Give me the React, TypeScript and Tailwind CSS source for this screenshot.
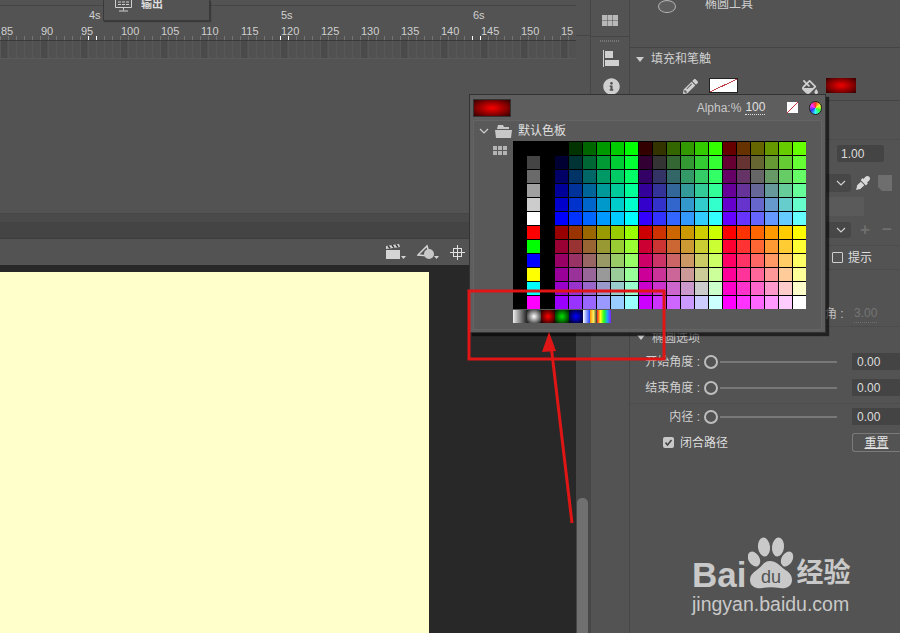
import React from "react";
import { FaFillDrip, FaInfoCircle, FaPencilAlt, FaEyeDropper } from "react-icons/fa";

const frames = ["85", "90", "95", "100", "105", "110", "115", "120", "125", "130", "135", "140", "145", "150", "15"];
const levels = [0, 51, 102, 153, 204, 255];
const baseColors = ["#000000", "#444444", "#6a6a6a", "#a0a0a0", "#cccccc", "#ffffff", "#ff0000", "#00ff00", "#0000ff", "#ffff00", "#00ffff", "#ff00ff"];

const paletteRows = baseColors.map((base, row) => {
  const cells = ["#000000", base, "#000000"];
  for (let block = 0; block < 3; block++) {
    for (let g = 0; g < 6; g++) {
      const r = levels[block + (row >= 6 ? 3 : 0)];
      cells.push(`rgb(${r},${levels[g]},${levels[row % 6]})`);
    }
  }
  return cells;
});

const Slider = ({ label, className }: { label: string; className?: string }) => (
  <div className={`flex h-[17px] items-center ${className ?? ""}`}>
    <span className="w-[70px] text-right text-[12px] text-[#d0d0d0]">{label}</span>
    <div className="ml-[4px] h-[14px] w-[14px] rounded-full border-2 border-[#bdbdbd]" />
    <div className="ml-[2px] h-[2px] w-[117px] bg-[#787878]" />
    <div className="ml-[15px] flex h-[17px] w-[48px] items-center bg-[#444444] pl-[5px] text-[12px] text-[#dddddd]">0.00</div>
  </div>
);

const Chevron = () => (
  <svg width="10" height="6" viewBox="0 0 10 6" fill="none" stroke="#cfcfcf" strokeWidth="1.2">
    <path d="M1 1l4 4 4-4" />
  </svg>
);

const Triangle = () => <div className="h-0 w-0 border-x-[4.5px] border-t-[5px] border-x-transparent border-t-[#cccccc]" />;

const BaiduPaw = () => (
  <svg width="48" height="54" viewBox="0 0 48 54" fill="#c9c9c9">
    <ellipse cx="16" cy="11" rx="6" ry="9.5" transform="rotate(-6 16 11)" />
    <ellipse cx="30" cy="11" rx="6" ry="9.5" transform="rotate(6 30 11)" />
    <ellipse cx="6" cy="23" rx="5.5" ry="8" transform="rotate(-30 6 23)" />
    <ellipse cx="39" cy="23" rx="5.5" ry="8" transform="rotate(30 39 23)" />
    <path d="M22 25c6 0 9 4 14 8 5 3 8 6 8 11 0 7-7 9-12 8-6-1-12-1-18 0-5 1-12-1-12-8 0-5 4-8 8-11 4-3 6-8 12-8z" />
    <text x="23" y="47" textAnchor="middle" fontSize="18" fontFamily="Liberation Sans" fill="#535353">du</text>
  </svg>
);

export default function App() {
  return (
    <div className="relative flex h-[633px] w-[900px] overflow-hidden bg-[#535353] font-['Liberation_Sans','Noto_Sans_CJK_SC',sans-serif]">
      {/* timeline + stage */}
      <div className="flex w-[576px] flex-col">
        <div className="h-[6px] border-b border-[#464646]" />
        <div className="flex h-[18px] pl-[89px] text-[11px] leading-[18px] text-[#d0d0d0]">
          <span className="w-[192px]">4s</span>
          <span className="w-[192px]">5s</span>
          <span>6s</span>
        </div>
        <div className="flex h-[12px] pl-[1px] text-[11px] leading-[14px] text-[#d0d0d0]">
          {frames.map((f, i) => (
            <span key={i} className="w-[40px] shrink-0">{f}</span>
          ))}
        </div>
        <div className="h-[5px] border-b border-[#3a3a3a] bg-[repeating-linear-gradient(90deg,transparent_0_88px,#ffffff_88px_89px,transparent_89px_96px,#ffffff_96px_97px,transparent_97px_192px),repeating-linear-gradient(90deg,#747474_0_1px,transparent_1px_8px)]" />
        <div className="h-[18px] border-b border-[#5a5a5a] bg-[repeating-linear-gradient(90deg,#585858_0_1px,#4a4a4a_1px_7px,#515151_7px_8px,#585858_8px_9px,#515151_9px_16px,#585858_16px_17px,#515151_17px_24px,#585858_24px_25px,#515151_25px_32px,#585858_32px_33px,#515151_33px_40px)]" />
        <div className="flex-1" />
        <div className="h-[9px] border-t border-[#464646] bg-[#4a4a4a]" />
        <div className="h-[16px] bg-[#444444]" />
        <div className="flex h-[27px] items-center gap-[11px] border-t border-[#3c3c3c] pl-[385px]">
          <svg width="21" height="16" viewBox="0 0 21 16" fill="#d4d4d4">
            <path d="M1 6h14v9H1z" />
            <path d="M1 2l13-2 1 3-14 2z" />
            <path d="M3 1.7l2 2.6M7 1l2 2.7M11 .5l2 2.6" stroke="#333" strokeWidth="1.4" />
            <path d="M16 12h5l-2.5 3z" />
          </svg>
          <svg width="22" height="16" viewBox="0 0 22 16" fill="none">
            <path d="M1 11L10 2l3 10z" stroke="#d4d4d4" strokeWidth="1.5" />
            <circle cx="12" cy="10" r="5" fill="#c8c8c8" />
            <path d="M17 12h5l-2.5 3z" fill="#d4d4d4" />
          </svg>
          <svg width="15" height="15" viewBox="0 0 15 15" fill="none" stroke="#e0e0e0" strokeWidth="1">
            <rect x="3.5" y="3.5" width="8" height="8" />
            <path d="M7.5 0v15M0 7.5h15" />
          </svg>
        </div>
        <div className="flex h-[368px] flex-col bg-[#282828] pt-[7px]">
          <div className="w-[429px] flex-1 bg-[#ffffcc]" />
        </div>
      </div>

      {/* scroll strip */}
      <div className="flex w-[14px] flex-col">
        <div className="h-[36px] border-b border-[#464646]" />
        <div className="h-[229px]" />
        <div className="flex flex-1 flex-col justify-end bg-[#474747] pl-px">
          <div className="h-[135px] w-[11px] rounded-t-[5px] bg-[#707070]" />
        </div>
      </div>

      {/* icon rail */}
      <div className="flex w-[40px] flex-col items-start border-x border-[#464646]">
        <div className="flex h-[37px] w-full justify-center border-b border-[#464646] pt-[15px]">
          <svg width="16" height="11" viewBox="0 0 16 11" fill="#b8b8b8">
            <path d="M0 0h5v5H0zM5.5 0h5v5h-5zM11 0h5v5h-5zM0 5.500h5V11H0zM5.500 5.500h5V11h-5zM11 5.500h5V11h-5z" />
          </svg>
        </div>
        <div className="ml-[9px] mt-[3px] h-[2px] w-[20px] bg-[repeating-linear-gradient(90deg,#777_0_1px,transparent_1px_2px)]" />
        <svg className="ml-[12px] mt-[8px]" width="16" height="17" viewBox="0 0 16 17" fill="#d0d0d0">
          <path d="M0 0h1v17H0zM2 1h8v7H2zM2 10h14v6H2z" />
        </svg>
        <FaInfoCircle className="ml-[12px] mt-[11px] text-[17px] text-[#cfcfcf]" />
      </div>

      {/* properties */}
      <div className="flex flex-1 flex-col overflow-hidden text-[12px] text-[#d0d0d0]">
        <div className="flex h-[48px] items-start border-b border-[#444444] pl-[28px]">
          <div className="h-[13px] w-[18px] rounded-[50%] border-[1.5px] border-[#b5b5b5] bg-[#5e5e5e]" />
          <span className="-mt-[3px] ml-[29px] leading-[14px]">椭圆工具</span>
        </div>
        <div className="flex h-[22px] items-center gap-[7px] pl-[6px]">
          <Triangle />
          <span>填充和笔触</span>
        </div>
        <div className="flex h-[31px] items-start border-b border-[#444444] pl-[53px] pt-[8px]">
          <FaPencilAlt className="mt-px text-[15px] text-[#cfcfcf]" />
          <div className="ml-[11px] h-[15px] w-[29px] border border-[#222222] bg-[linear-gradient(to_top_left,#ffffff_48%,#c0404a_48%,#c0404a_52%,#ffffff_52%)]" />
          <FaFillDrip className="ml-[64px] mt-px text-[16px] text-[#cfcfcf]" />
          <div className="ml-[8px] h-[15px] w-[30px] bg-[radial-gradient(ellipse,#e00000_10%,#700000_70%,#300000)]" />
        </div>
        <div className="h-[39px] border-b border-[#4c4c4c]" />
        <div className="mt-[5px] flex justify-end pr-[16px]">
          <div className="flex h-[17px] w-[47px] items-center rounded-[2px] bg-[#444444] pl-[4px] text-[#dddddd]">1.00</div>
        </div>
        <div className="mt-[12px] flex h-[18px] items-center pl-[196px]">
          <div className="flex h-[18px] w-[25px] items-center justify-end rounded-r-[3px] bg-[#474747] pr-[5px]"><Chevron /></div>
          <FaEyeDropper className="ml-[5px] text-[14px] text-[#d8d8d8]" />
          <svg className="ml-[8px]" width="14" height="16" viewBox="0 0 14 16" fill="#6e6e6e">
            <path d="M0 0h14v16H4L0 12z" />
          </svg>
        </div>
        <div className="mt-[5px] ml-[196px] h-[19px] w-[38px] bg-[#5a5a5a]" />
        <div className="mt-[6px] flex h-[16px] items-center pl-[196px]">
          <div className="flex h-[16px] w-[25px] items-center justify-end rounded-r-[3px] bg-[#474747] pr-[5px]"><Chevron /></div>
          <span className="ml-[8px] w-[12px] text-center text-[17px] font-bold leading-[16px] text-[#6f6f6f]">+</span>
          <span className="ml-[10px] w-[12px] text-center text-[17px] font-bold leading-[16px] text-[#6f6f6f]">−</span>
        </div>
        <div className="mt-[7px] flex h-[25px] items-center border-y border-[#4c4c4c] pl-[202px]">
          <div className="h-[11px] w-[11px] rounded-[1px] border border-[#cfcfcf]" />
          <span className="ml-[5px] text-[#dddddd]">提示</span>
        </div>
        <div className="flex h-[57px] items-end border-b border-[#4c4c4c] pb-[3px] pl-[195px]">
          <span className="w-[24px] text-[#c0c0c0]">角 :</span>
          <span className="ml-[5px] border-b border-dotted border-[#6f6f6f] text-[#757575]">3.00</span>
        </div>
        <div className="flex h-[20px] items-center gap-[7px] pl-[7px] pt-[1px]">
          <Triangle />
          <span className="text-[#c8c8c8]">椭圆选项</span>
        </div>
        <Slider label="开始角度 :" className="mt-[6px]" />
        <Slider label="结束角度 :" className="mt-[9px]" />
        <div className="mt-[7px] border-b border-[#4c4c4c]" />
        <Slider label="内径 :" className="mt-[4px]" />
        <div className="mt-[8px] flex h-[19px] items-center pl-[33px]">
          <div className="flex h-[11px] w-[11px] items-center justify-center rounded-[2px] bg-[#c8c8c8]">
            <svg width="9" height="9" viewBox="0 0 9 9" fill="none" stroke="#444" strokeWidth="1.600">
              <path d="M1.500 4.500l2 2.500 4-5" />
            </svg>
          </div>
          <span className="ml-[6px] text-[#dddddd]">闭合路径</span>
          <div className="ml-[124px] flex h-[19px] flex-1 items-center justify-center rounded-l-[3px] border border-r-0 border-[#7a7a7a] text-[#e4e4e4] underline">重置</div>
        </div>
      </div>

      {/* output menu overlapping the timeline */}
      <div className="absolute left-[103px] top-0 flex h-[21px] w-[107px] items-start gap-[9px] border-x border-b border-[#3a3a3a] bg-[#535353] pl-[11px] shadow-[1px_1px_1px_rgba(0,0,0,0.3)]">
        <svg className="-mt-[1px]" width="17" height="13" viewBox="0 0 17 13" fill="none" stroke="#cfcfcf">
          <path d="M.5 0v8.500h16V0M8.500 8.500v3M4 12h9" />
          <path d="M3 3h11M3 5.500h11" strokeDasharray="3 1" />
        </svg>
        <span className="-mt-[3px] text-[11px] font-bold leading-[14px] text-[#dddddd]">输出</span>
      </div>

      {/* colour swatch popup */}
      <div className="absolute left-[469px] top-[94px] flex h-[239px] w-[357px] flex-col border border-[#333333] bg-[#5e5e5e] px-[3px] shadow-[3px_3px_1px_rgba(0,0,0,0.6)]">
        <div className="flex h-[25px] shrink-0 items-center">
          <div className="h-[18px] w-[40px] border border-[#333333] bg-[radial-gradient(ellipse,#f00000_5%,#900000_55%,#300000)]" />
          <span className="ml-[186px] text-[12px] text-[#c8c8c8]">Alpha:%</span>
          <span className="ml-[4px] border-b border-dotted border-[#e0e0e0] text-[12px] leading-[13px] text-[#e0e0e0]">100</span>
          <div className="ml-[22px] h-[11px] w-[11px] bg-[linear-gradient(to_top_left,#ffffff_46%,#d03040_46%,#d03040_54%,#ffffff_54%)]" />
          <div className="ml-[11px] h-[14px] w-[14px] rounded-full border border-[#222222] bg-[conic-gradient(#ff3030,#ffff30,#30ff30,#30ffff,#3030ff,#ff30ff,#ff3030)]" />
        </div>
        <div className="flex h-[210px] w-[349px] flex-col border border-[#646464] bg-[#595959]">
          <div className="flex h-[20px] shrink-0 items-center pl-[5px]">
            <Chevron />
            <svg className="ml-[6px]" width="17" height="13" viewBox="0 0 17 13" fill="#c8c8c8">
              <path d="M3 0h5l1 2h5v2H2zM0 5h17l-1 8H1z" />
            </svg>
            <span className="ml-[6px] text-[12px] text-[#e0e0e0]">默认色板</span>
          </div>
          <div className="flex">
            <div className="w-[39px] pl-[19px] pt-[5px]">
              <svg width="14" height="9" viewBox="0 0 14 9" fill="#b4b4b4">
                <path d="M0 0h4v4H0zM5 0h4v4H5zM10 0h4v4h-4zM0 5h4v4H0zM5 5h4v4H5zM10 5h4v4h-4z" />
              </svg>
            </div>
            <div>
              <div className="grid grid-cols-[repeat(21,13px)] gap-px bg-black pt-px">
                {paletteRows.flat().map((c, i) => (
                  <div key={i} className="h-[13px]" style={{ backgroundColor: c }} />
                ))}
              </div>
              <div className="flex h-[14px] bg-[#595959] pt-px">
                <div className="w-[14px] bg-[linear-gradient(90deg,#eeeeee,#222222)]" />
                <div className="w-[14px] bg-[radial-gradient(circle,#ffffff,#111111)]" />
                <div className="w-[14px] bg-[radial-gradient(circle,#ff0000,#100000)]" />
                <div className="w-[14px] bg-[radial-gradient(circle,#00e000,#001000)]" />
                <div className="w-[14px] bg-[radial-gradient(circle,#0000ff,#000010)]" />
                <div className="w-[7px] bg-[linear-gradient(90deg,#ffffff,#2040ff)]" />
                <div className="w-[7px] bg-[linear-gradient(90deg,#ff9000,#fff060,#303030)]" />
                <div className="w-[14px] bg-[linear-gradient(90deg,#ff2020,#ffff20,#20ff20,#20a0ff,#8020ff)]" />
              </div>
            </div>
          </div>
        </div>
      </div>

      {/* red annotation */}
      <svg className="pointer-events-none absolute inset-0" width="900" height="633" viewBox="0 0 900 633" fill="none">
        <rect x="469" y="291" width="195" height="68" stroke="#e01515" strokeWidth="3" />
        <path d="M572 523L551 345" stroke="#e01515" strokeWidth="3" />
        <path d="M549 332l7 19-14 1z" fill="#e01515" />
      </svg>

      {/* watermark */}
      <div className="absolute left-[692px] top-[536px] flex w-[165px] flex-col text-[#c9c9c9]">
        <div className="flex h-[54px] items-end">
          <span className="text-[35px] font-bold leading-[30px]">Bai</span>
          <span className="ml-[2px]"><BaiduPaw /></span>
          <span className="mb-[2px] text-[27px] font-bold leading-[30px]">经验</span>
        </div>
        <span className="mt-[2px] text-[19.500px] leading-[24px]">jingyan.baidu.com</span>
      </div>
    </div>
  );
}
